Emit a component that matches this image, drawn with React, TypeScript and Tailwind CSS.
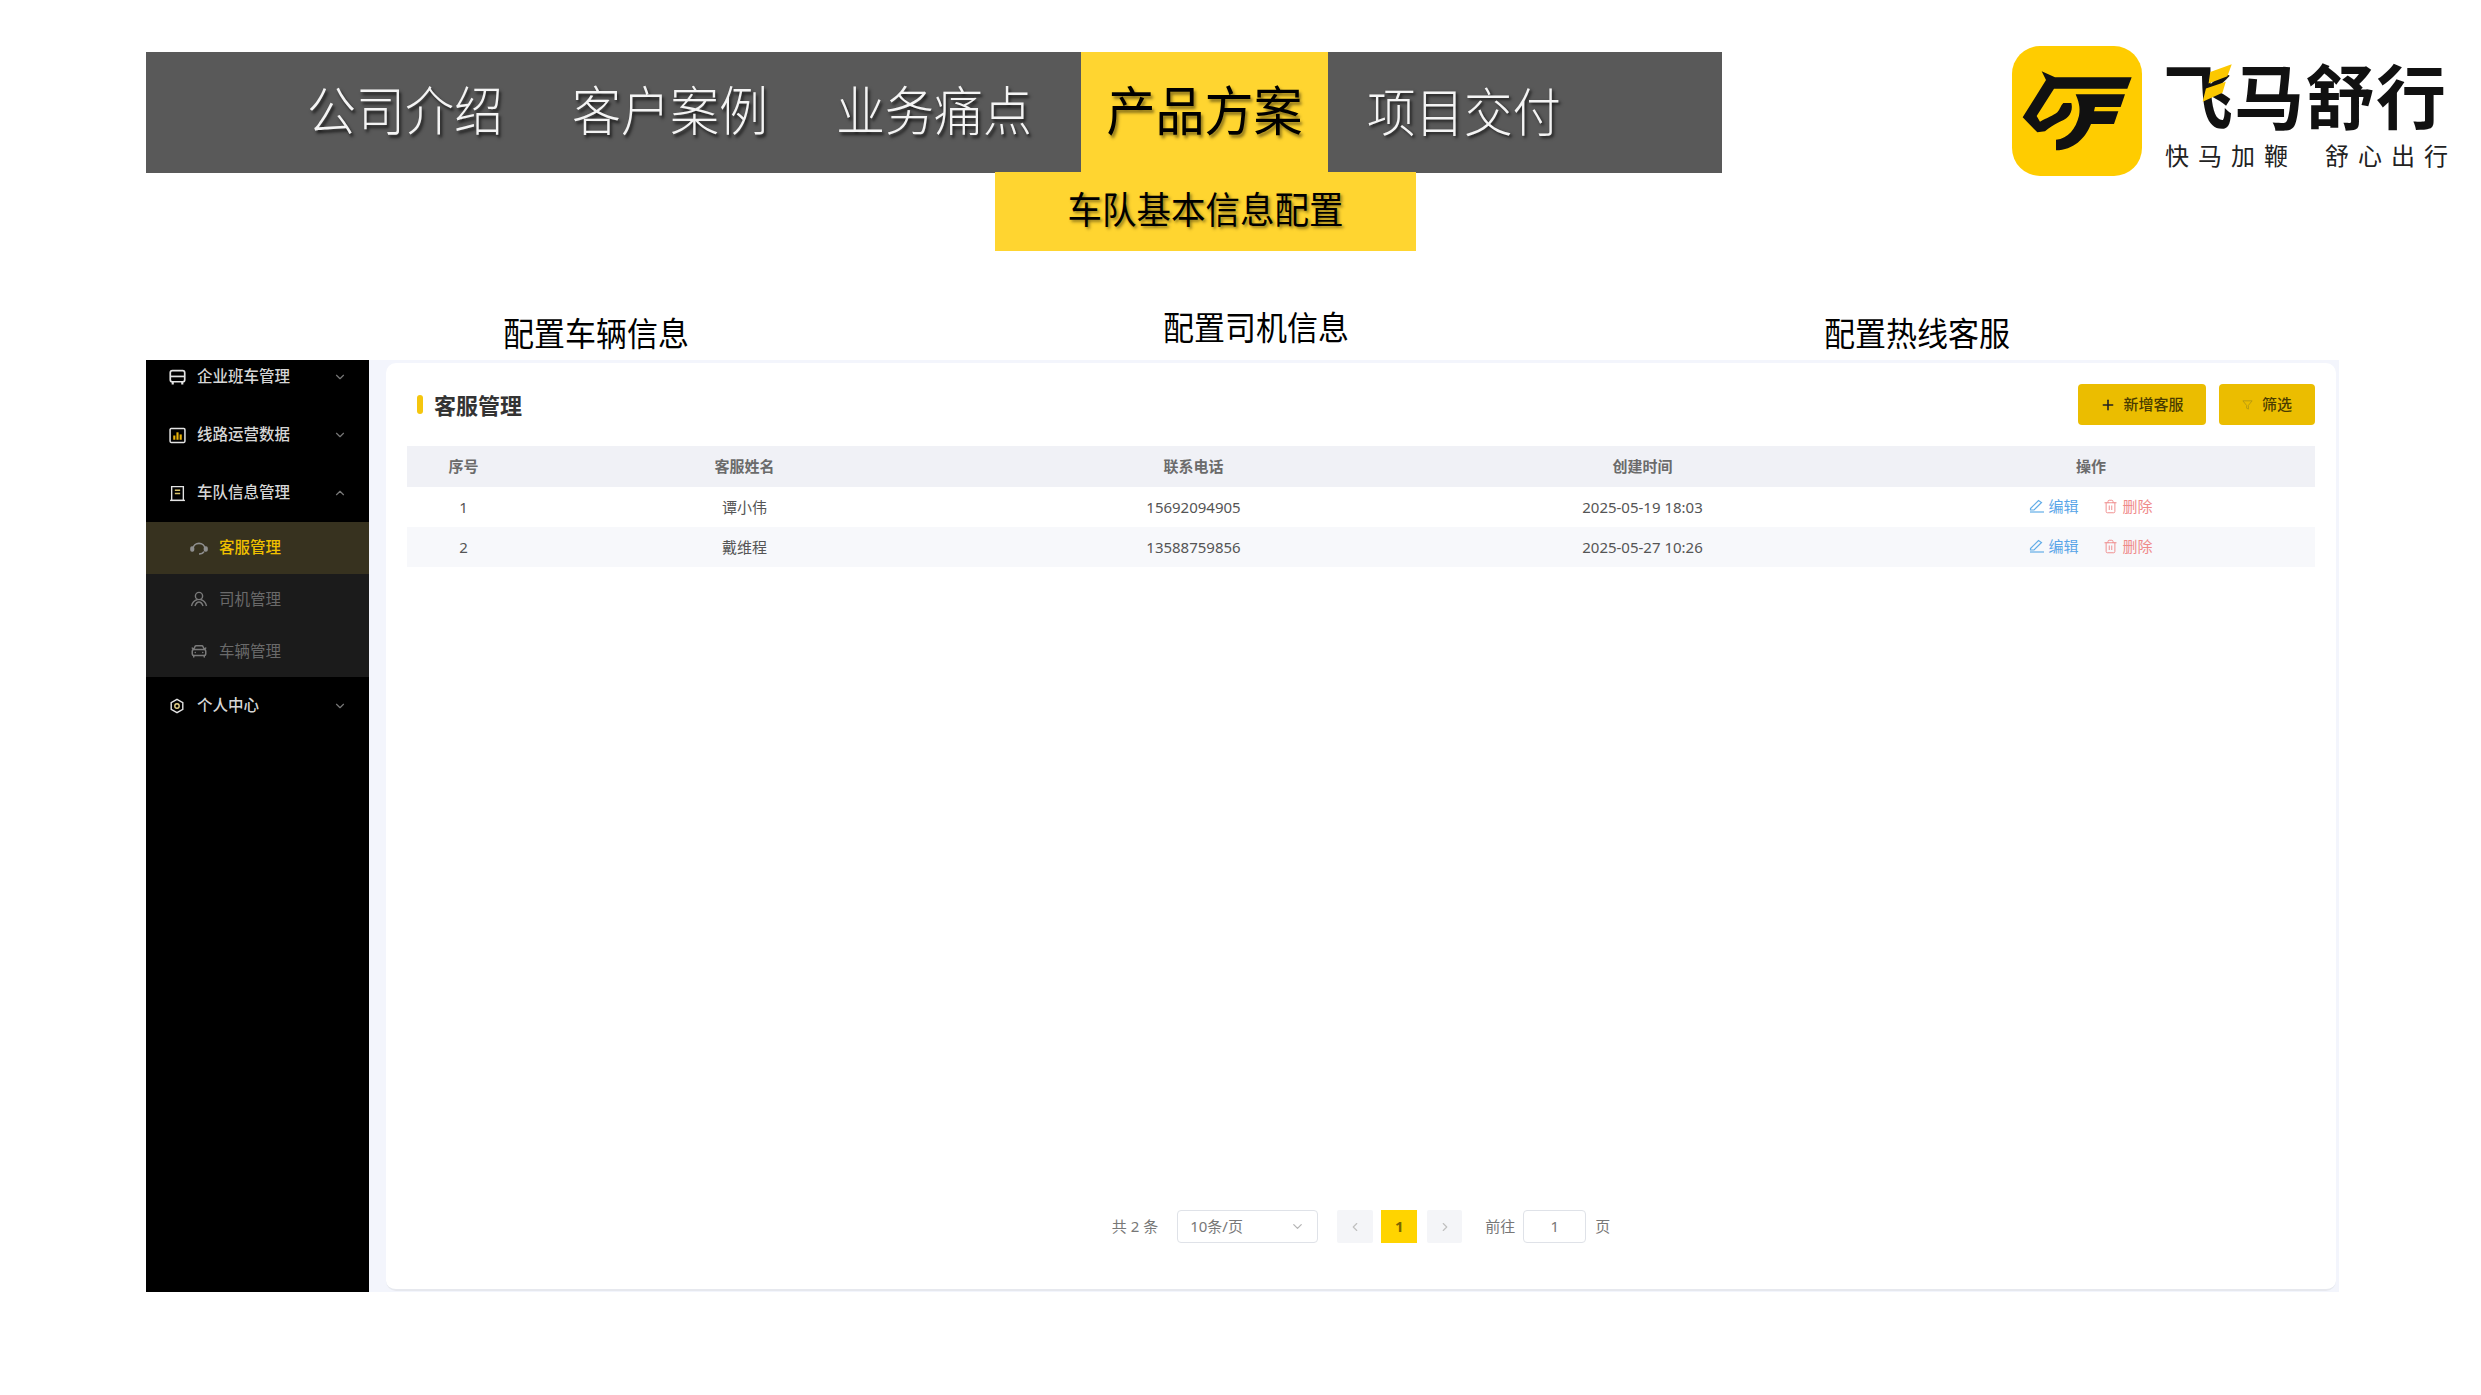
import { CarFront, ChevronDown, ChevronLeft, ChevronRight, ChevronUp, Plus, Trash2 } from "lucide-react";

const TABS = [
  { label: "公司介绍", ml: "ml-[161px]" },
  { label: "客户案例", ml: "ml-[69px]" },
  { label: "业务痛点", ml: "ml-[68px]" },
];

const ROWS = [
  { id: 1, name: "谭小伟", phone: "15692094905", time: "2025-05-19 18:03", rowClass: "bg-white" },
  { id: 2, name: "戴维程", phone: "13588759856", time: "2025-05-27 10:26", rowClass: "bg-[#f7f8fb]" },
];

const ROW_GRID = "grid grid-cols-[113px_449px_449px_449px_448px] items-center text-center";

function LogoMark() {
  return (
    <svg viewBox="6 6 390 390" className="w-[130px] h-[130px] shrink-0">
      <rect x="6" y="6" width="390" height="390" rx="84" fill="#ffcc00" />
      <path
        d="M95 82L135 100L365 100L352 134L132 134L80 216L90 233C110 222 130 215 142 205C150 196 152 184 160 177L184 177C188 192 184 208 174 218C160 232 130 238 105 262L82 265L38 220L108 108Z"
        fill="#111"
      />
      <path
        d="M197 151L345 151L332 189L255 189L252 202L325 202L312 240L243 240C225 285 190 318 138 319L138 287C175 283 197 255 207 215C212 190 205 170 197 151Z"
        fill="#111"
      />
    </svg>
  );
}

function Logo() {
  return (
    <div className="flex ml-[290px] -mt-[6px] items-start">
      <LogoMark />
      <div className="ml-[21px] mt-[11px] relative">
        <div className="text-[70px] leading-[80px] font-bold tracking-[1px] text-[#111] whitespace-nowrap">飞马舒行</div>
        {/* yellow wing on the first character */}
        <svg viewBox="130 25 110 130" className="absolute left-[36px] top-[5px] w-[37px] h-[43px]">
          <path d="M163 55L228 32L215 68L158 90Z" fill="#fcc800" />
          <path d="M150 105L210 85L200 118L140 145Z" fill="#fcc800" />
        </svg>
        <div className="flex ml-[2px] mt-[4px] text-[24px] leading-[30px] text-[#222] tracking-[9px] whitespace-nowrap">
          <span>快马加鞭</span>
          <span className="ml-[28px]">舒心出行</span>
        </div>
      </div>
    </div>
  );
}

function Nav() {
  return (
    <div className="w-[1576px] h-[121px] bg-[#595959] flex text-[49px] leading-none font-light">
      {TABS.map((tab) => (
        <div key={tab.label} className={`${tab.ml} h-full flex items-center pb-[2px] text-[#f4f4f4] [text-shadow:2px_2px_3px_rgba(0,0,0,0.7)] whitespace-nowrap`}>
          <span className="inline-block scale-y-[1.08]">{tab.label}</span>
        </div>
      ))}
      <div className="ml-[49px] w-[247px] h-full bg-[#ffd530] flex items-center justify-center pb-[2px] text-black font-normal [text-shadow:2px_2px_3px_rgba(0,0,0,0.45)] whitespace-nowrap">
        <span className="inline-block scale-y-[1.08]">产品方案</span>
      </div>
      <div className="ml-[39px] h-full flex items-center pb-[2px] text-[#f4f4f4] text-[48.5px] [text-shadow:2px_2px_3px_rgba(0,0,0,0.7)] whitespace-nowrap">
        <span className="inline-block scale-y-[1.08]">项目交付</span>
      </div>
    </div>
  );
}

function BusIcon() {
  return (
    <svg viewBox="0 0 16 16" className="w-[17px] h-[17px]" fill="none" stroke="#e4e4e4" strokeWidth="1.6">
      <rect x="1.2" y="1.5" width="13.6" height="10.5" rx="2" />
      <path d="M1.2 7H14.8" />
      <path d="M3.5 12V14.5M12.5 12V14.5" strokeWidth="2" />
    </svg>
  );
}

function ChartIcon() {
  return (
    <svg viewBox="0 0 16 16" className="w-[17px] h-[17px]">
      <rect x="1" y="1.5" width="14" height="13" rx="1" fill="none" stroke="#e4e4e4" strokeWidth="1.4" />
      <rect x="4" y="8" width="2" height="4" fill="#eab308" />
      <rect x="7" y="5" width="2" height="7" fill="#eab308" />
      <rect x="10" y="7" width="2" height="5" fill="#eab308" />
    </svg>
  );
}

function FleetIcon() {
  return (
    <svg viewBox="0 0 16 16" className="w-[17px] h-[17px]" fill="none" stroke="#e4e4e4" strokeWidth="1.3">
      <path d="M2.5 1.5H13.5V14.5H2.5Z" />
      <path d="M5.5 5H10.5M5.5 8H10.5" stroke="#d9c46a" />
      <path d="M1 14.5H15" />
    </svg>
  );
}

function HexIcon() {
  return (
    <svg viewBox="0 0 16 16" className="w-[16px] h-[16px]" fill="none" stroke="#e4e4e4" strokeWidth="1.4">
      <path d="M8 1.3L13.8 4.6V11.4L8 14.7L2.2 11.4V4.6Z" />
      <circle cx="8" cy="8" r="2.2" stroke="#e8d48a" />
    </svg>
  );
}

function HeadsetIcon() {
  return (
    <svg viewBox="0 0 18 16" className="w-[18px] h-[16px]" fill="none" stroke="#8f8f8f" strokeWidth="1.6">
      <path d="M3 9C3 1.5 15 1.5 15 9" />
      <rect x="1" y="7" width="2.5" height="4" rx="1" fill="#8f8f8f" />
      <rect x="14.5" y="7" width="2.5" height="4" rx="1" fill="#8f8f8f" />
      <path d="M14 11.5C13 13.5 11 14 9 14" />
    </svg>
  );
}

function DriverIcon() {
  return (
    <svg viewBox="0 0 18 16" className="w-[18px] h-[16px]" fill="none" stroke="#7a7a7a" strokeWidth="1.4">
      <circle cx="9" cy="5" r="3.6" />
      <path d="M1.5 15C2.5 10.5 5.5 9 7.5 8.5M16.5 15C15.5 10.5 12.5 9 10.5 8.5M5 15C6 12 8 11 9 11C10 11 12 12 13 15" />
    </svg>
  );
}

function EditIcon() {
  return (
    <svg viewBox="0 0 16 14" className="w-[16px] h-[14px]" fill="none" stroke="#62ade8" strokeWidth="1.2">
      <path d="M1.5 9.5L9.5 1.5L12.5 3.5L5 11H1.5Z" />
      <path d="M1 13H15" />
    </svg>
  );
}

function Sidebar() {
  const topClass = "h-[58px] pl-[23px] pr-[22px] flex items-center text-[15.5px] font-medium text-[#d6d6d6]";
  const subClass = "h-[51.67px] pl-[44px] flex items-center text-[15.5px]";
  return (
    <aside className="w-[223px] bg-black overflow-hidden shrink-0">
      <div className="-mt-[12px]">
        <div className={topClass}>
          <BusIcon />
          <span className="ml-[11px] flex-1">企业班车管理</span>
          <ChevronDown size={14} color="#777" />
        </div>
        <div className={topClass}>
          <ChartIcon />
          <span className="ml-[11px] flex-1">线路运营数据</span>
          <ChevronDown size={14} color="#777" />
        </div>
        <div className={topClass}>
          <FleetIcon />
          <span className="ml-[11px] flex-1">车队信息管理</span>
          <ChevronUp size={14} color="#777" />
        </div>
        <div className="bg-[#1b1b1b]">
          <div className={`${subClass} bg-[#37321f] text-[#f0c000] font-medium`}>
            <HeadsetIcon />
            <span className="ml-[11px]">客服管理</span>
          </div>
          <div className={`${subClass} text-[#6a6a6a]`}>
            <DriverIcon />
            <span className="ml-[11px]">司机管理</span>
          </div>
          <div className={`${subClass} text-[#6a6a6a]`}>
            <CarFront size={18} color="#7a7a7a" />
            <span className="ml-[11px]">车辆管理</span>
          </div>
        </div>
        <div className={topClass}>
          <HexIcon />
          <span className="ml-[12px] flex-1">个人中心</span>
          <ChevronDown size={14} color="#777" />
        </div>
      </div>
    </aside>
  );
}

function CustomerTable() {
  return (
    <div className="mt-[21px]">
      <div className={`${ROW_GRID} h-[41px] bg-[#f0f1f6] text-[15px] font-bold text-[#6b6b6b]`}>
        <div>序号</div>
        <div>客服姓名</div>
        <div>联系电话</div>
        <div>创建时间</div>
        <div>操作</div>
      </div>
      {ROWS.map((row) => (
        <div key={row.id} className={`${ROW_GRID} h-[40px] ${row.rowClass} text-[15px] text-[#555]`}>
          <div>{row.id}</div>
          <div>{row.name}</div>
          <div>{row.phone}</div>
          <div>{row.time}</div>
          <div className="flex justify-center items-center pb-[2px]">
            <EditIcon />
            <span className="ml-[3px] text-[#5aa5e8]">编辑</span>
            <Trash2 size={15} color="#ef8a8a" strokeWidth={1.5} className="ml-[24px]" />
            <span className="ml-[5px] text-[#ef8a8a]">删除</span>
          </div>
        </div>
      ))}
    </div>
  );
}

function Pagination() {
  return (
    <div className="mt-auto mb-[46px] h-[33px] flex items-center justify-center text-[15px] text-[#777]">
      <span className="whitespace-nowrap">共 2 条</span>
      <div className="ml-[19px] w-[141px] h-[33px] border border-[#dfe2e8] rounded-[4px] flex items-center justify-between pl-[12px] pr-[12px]">
        <span>10条/页</span>
        <ChevronDown size={15} color="#b5b5b5" />
      </div>
      <div className="ml-[19px] w-[36px] h-[33px] bg-[#f4f5f8] rounded-[2px] flex items-center justify-center">
        <ChevronLeft size={14} color="#c0c0c0" />
      </div>
      <div className="ml-[8px] w-[36px] h-[33px] bg-[#ffd400] flex items-center justify-center font-bold text-[#7a6500]">1</div>
      <div className="ml-[10px] w-[35px] h-[33px] bg-[#f4f5f8] rounded-[2px] flex items-center justify-center">
        <ChevronRight size={14} color="#c0c0c0" />
      </div>
      <span className="ml-[23px]">前往</span>
      <div className="ml-[8px] w-[63px] h-[33px] border border-[#dfe2e8] rounded-[4px] flex items-center justify-center">1</div>
      <span className="ml-[9px]">页</span>
    </div>
  );
}

export default function App() {
  return (
    <div className="w-[2481px] h-[1395px] bg-white pt-[52px] pl-[146px] overflow-hidden font-['Noto_Sans','Noto_Sans_CJK_SC',sans-serif]">
      <div className="flex items-start h-[199px]">
        <div>
          <Nav />
          <div className="-mt-[1px] ml-[849px] w-[421px] h-[79px] bg-[#ffd530] flex items-center justify-center pb-[2px] text-[34.5px] leading-none text-black [text-shadow:2px_2px_3px_rgba(0,0,0,0.45)] whitespace-nowrap">
            <span className="inline-block scale-y-[1.08]">车队基本信息配置</span>
          </div>
        </div>
        <Logo />
      </div>

      <div className="flex h-[109px] items-start text-[31px] leading-none text-black whitespace-nowrap">
        <div className="ml-[357px] mt-[67px] scale-y-[1.06]">配置车辆信息</div>
        <div className="ml-[474px] mt-[61px] scale-y-[1.06]">配置司机信息</div>
        <div className="ml-[475px] mt-[67px] scale-y-[1.06]">配置热线客服</div>
      </div>

      <div className="flex w-[2192px] h-[932px]">
        <Sidebar />
        <main className="flex-1 bg-[#f3f5fc] pl-[17px] pr-[3px] pt-[3px] pb-[1px]">
          <div className="h-full bg-white rounded-[10px] border-b-2 border-[#e6e8ee] pl-[21px] pr-[21px] pt-[21px] flex flex-col">
            <div className="flex items-center h-[41px]">
              <div className="ml-[10px] w-[6px] h-[19px] rounded-full bg-[#f5c60e]" />
              <h1 className="ml-[11px] text-[22px] font-bold text-[#333] leading-none">客服管理</h1>
              <button className="ml-auto w-[128px] h-[41px] bg-[#ebbd00] rounded-[4px] flex items-center justify-center text-[15px] font-medium text-[#4a3c00]">
                <Plus size={16} color="#222" strokeWidth={2.4} />
                <span className="ml-[7px]">新增客服</span>
              </button>
              <button className="ml-[13px] w-[96px] h-[41px] bg-[#ebbd00] rounded-[4px] flex items-center justify-center text-[15px] font-medium text-[#4a3c00]">
                <svg viewBox="0 0 12 12" className="w-[11px] h-[11px]" fill="none" stroke="#b89a10" strokeWidth="1">
                  <path d="M1 2H11L7 7V11L5 10V7Z" />
                </svg>
                <span className="ml-[9px]">筛选</span>
              </button>
            </div>
            <CustomerTable />
            <Pagination />
          </div>
        </main>
      </div>
    </div>
  );
}
